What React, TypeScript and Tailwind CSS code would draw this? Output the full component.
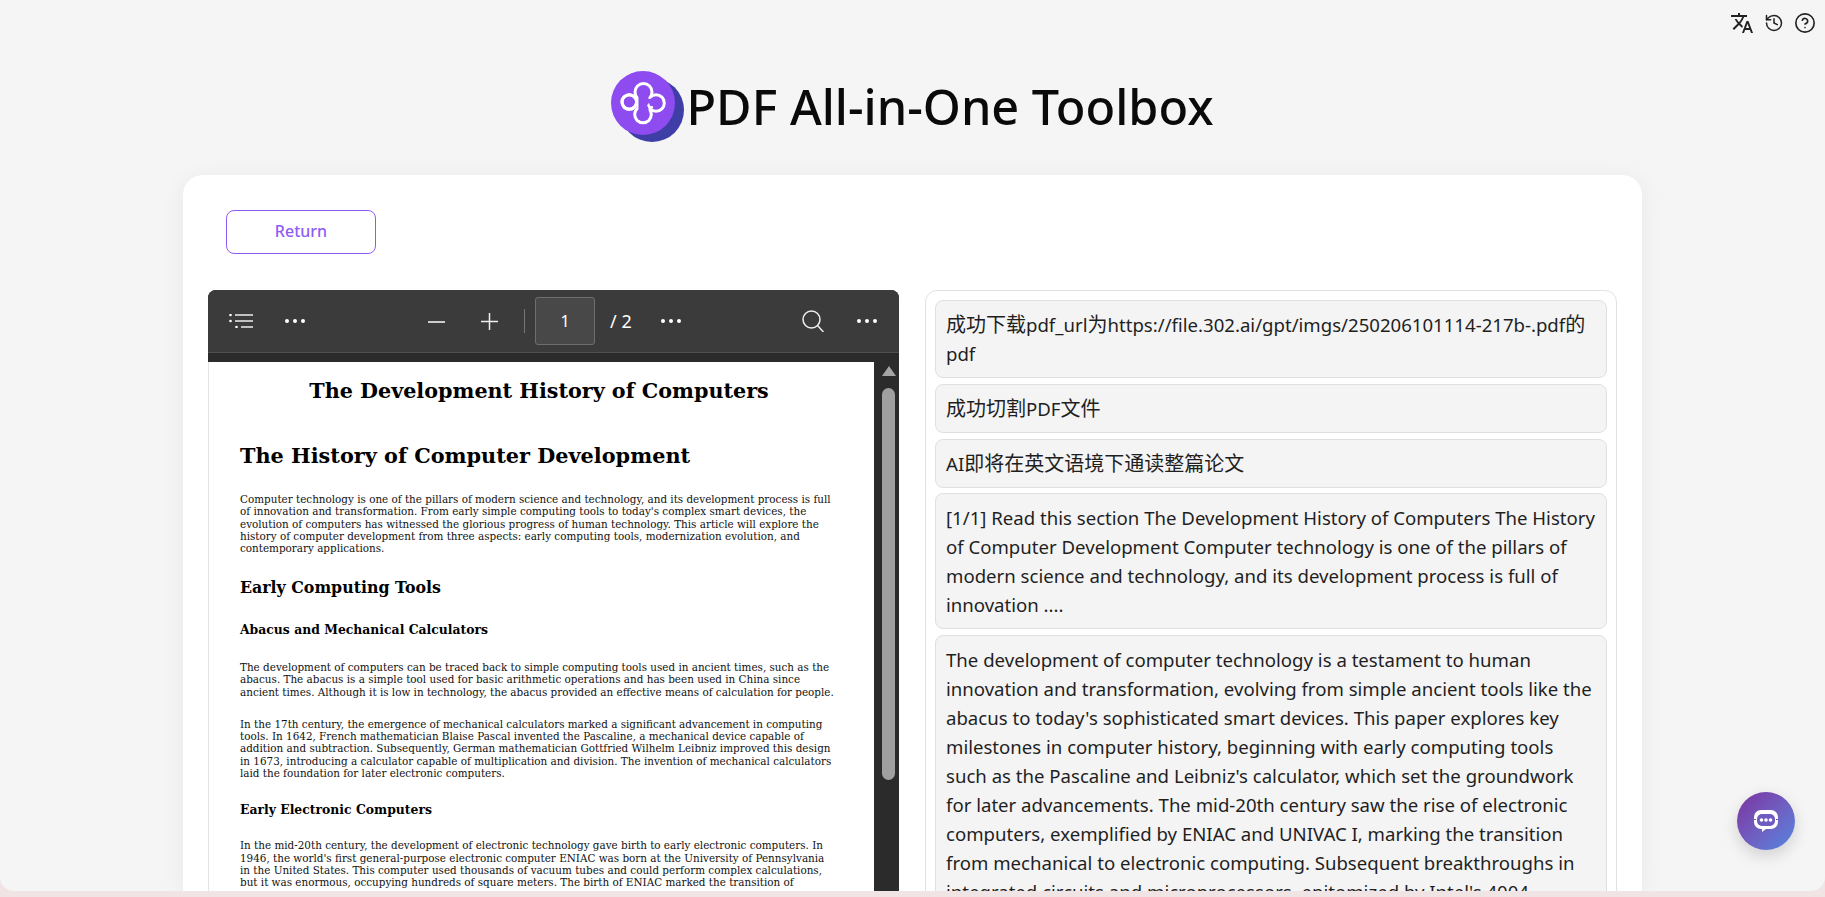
import { MdTranslate } from "react-icons/md";
import { History, CircleHelp } from "lucide-react";

const sans = "font-['Noto_Sans','Noto_Sans_CJK_SC',sans-serif]";

function Logo() {
  const lobes = [
    [32.5, 21, 10],
    [32, 43.5, 9.8],
    [18.3, 31, 8.8],
    [45, 32, 9.8],
  ];
  return (
    <svg width="73" height="72" viewBox="0 0 73 72" className="shrink-0">
      <circle cx="41" cy="39" r="32" fill="#3f3ea6" />
      <circle cx="32" cy="32" r="32" fill="#8e4cf0" />
      {lobes.map(([x, y, r]) => (
        <circle key={`${x}-${y}`} cx={x} cy={y} r={r} fill="#fff" />
      ))}
      <rect x="26" y="24" width="13" height="14" fill="#fff" />
      {lobes.map(([x, y, r]) => (
        <circle key={`i${x}-${y}`} cx={x} cy={y} r={r - 3} fill="#8e4cf0" />
      ))}
      <rect x="27.5" y="20" width="10" height="24" fill="#8e4cf0" />
      <rect x="37" y="28" width="6" height="4" fill="#8e4cf0" />
      <circle cx="18.3" cy="31" r="7.3" fill="none" stroke="#fff" strokeWidth="3" />
      <path d="M37.5 34.5c.8 1.8 1.8 2.4 3.4 1.8" stroke="#fff" strokeWidth="2.6" fill="none" strokeLinecap="round" />
    </svg>
  );
}

function Dots() {
  return (
    <span className="flex gap-[4px]">
      <span className="h-[4px] w-[4px] rounded-full bg-white" />
      <span className="h-[4px] w-[4px] rounded-full bg-white" />
      <span className="h-[4px] w-[4px] rounded-full bg-white" />
    </span>
  );
}

function Toolbar() {
  return (
    <div className="flex h-[63px] items-center rounded-t-lg border-b border-[#505050] bg-[#3b3b3b] pl-[21px] pr-[22px] text-white">
      <div className="flex w-[199px] items-center gap-[32px]">
        <svg width="24" height="14" viewBox="0 0 24 14" stroke="#eee" strokeWidth="1.4" fill="none">
          <path d="M6 1h18M6 7h18M12 13h12" />
          <circle cx="1.5" cy="1" r="1.3" fill="#fff" stroke="none" />
          <circle cx="1.5" cy="7" r="1.3" fill="#fff" stroke="none" />
          <circle cx="7.5" cy="13" r="1.3" fill="#fff" stroke="none" />
        </svg>
        <Dots />
      </div>
      <div className="flex items-center">
        <svg width="17" height="17" viewBox="0 0 17 17" stroke="#ccc" strokeWidth="2" className="mr-[36px]"><path d="M0 9h17" /></svg>
        <svg width="17" height="17" viewBox="0 0 17 17" stroke="#eee" strokeWidth="1.5" className="mr-[26px]"><path d="M0 8.5h17M8.5 0v17" /></svg>
        <span className="mr-[10px] h-[24px] w-px bg-[#777]" />
        <span className="mr-[15px] flex h-[48px] w-[60px] items-center justify-center rounded-[3px] border border-[#6e6e6e] bg-[#484848] text-[16px]">1</span>
        <span className="mr-[29px] text-[18px]">/ 2</span>
        <Dots />
      </div>
      <div className="ml-auto flex items-center gap-[33px]">
        <svg width="22" height="22" viewBox="0 0 22 22" stroke="#eee" strokeWidth="1.5" fill="none"><circle cx="9.5" cy="9.5" r="8.5" /><path d="M15.5 15.5l6 6.5" /></svg>
        <Dots />
      </div>
    </div>
  );
}

function PdfPage() {
  const p = "text-[10.4px] leading-[12.3px] text-[#111]";
  const h4 = "text-[12.4px] font-bold leading-[15px]";
  return (
    <div className="h-full w-[665px] overflow-hidden bg-white pl-[31px] pr-[36px] pt-[17px] font-['DejaVu_Serif',serif] text-black">
      <h1 className="text-center text-[20.7px] font-bold leading-[24px]">The Development History of Computers</h1>
      <h2 className="mt-[40px] text-[20.8px] font-bold leading-[26px]">The History of Computer Development</h2>
      <p className={`${p} mt-[24px]`}>Computer technology is one of the pillars of modern science and technology, and its development process is full of innovation and transformation. From early simple computing tools to today's complex smart devices, the evolution of computers has witnessed the glorious progress of human technology. This article will explore the history of computer development from three aspects: early computing tools, modernization evolution, and contemporary applications.</p>
      <h3 className="mt-[25px] text-[15.8px] font-bold leading-[18px]">Early Computing Tools</h3>
      <h4 className={`mt-[25px] ${h4}`}>Abacus and Mechanical Calculators</h4>
      <p className={`${p} mt-[23.5px]`}>The development of computers can be traced back to simple computing tools used in ancient times, such as the abacus. The abacus is a simple tool used for basic arithmetic operations and has been used in China since ancient times. Although it is low in technology, the abacus provided an effective means of calculation for people.</p>
      <p className={`${p} mt-[20px]`}>In the 17th century, the emergence of mechanical calculators marked a significant advancement in computing tools. In 1642, French mathematician Blaise Pascal invented the Pascaline, a mechanical device capable of addition and subtraction. Subsequently, German mathematician Gottfried Wilhelm Leibniz improved this design in 1673, introducing a calculator capable of multiplication and division. The invention of mechanical calculators laid the foundation for later electronic computers.</p>
      <h4 className={`mt-[22.5px] ${h4}`}>Early Electronic Computers</h4>
      <p className={`${p} mt-[22.5px] whitespace-nowrap`}>
        In the mid-20th century, the development of electronic technology gave birth to early electronic computers. In
        <br />
        1946, the world's first general-purpose electronic computer ENIAC was born at the University of Pennsylvania
        <br />
        in the United States. This computer used thousands of vacuum tubes and could perform complex calculations,
        <br />
        but it was enormous, occupying hundreds of square meters. The birth of ENIAC marked the transition of
        <br />
        computers from the mechanical era to the electronic era.
      </p>
    </div>
  );
}

const logs = [
  "成功下载pdf_url为https://file.302.ai/gpt/imgs/250206101114-217b-.pdf的pdf",
  "成功切割PDF文件",
  "AI即将在英文语境下通读整篇论文",
  "[1/1] Read this section The Development History of Computers The History of Computer Development Computer technology is one of the pillars of modern science and technology, and its development process is full of innovation ....",
  "The development of computer technology is a testament to human innovation and transformation, evolving from simple ancient tools like the abacus to today's sophisticated smart devices. This paper explores key milestones in computer history, beginning with early computing tools such as the Pascaline and Leibniz's calculator, which set the groundwork for later advancements. The mid-20th century saw the rise of electronic computers, exemplified by ENIAC and UNIVAC I, marking the transition from mechanical to electronic computing. Subsequent breakthroughs in integrated circuits and microprocessors, epitomized by Intel's 4004",
];

function Mixed({ text }: { text: string }) {
  return (
    <>
      {text.split(/([\u4e00-\u9fff]+)/).map((s, i) =>
        i % 2 === 1 ? (
          <span key={i} className="text-[20px]">{s}</span>
        ) : (
          <span key={i}>{s}</span>
        ),
      )}
    </>
  );
}

export default function App() {
  return (
    <div className={`h-[897px] w-[1825px] overflow-hidden bg-[#f0e4e4] ${sans}`}>
      <div className="relative flex h-[891px] flex-col overflow-hidden rounded-b-[14px] bg-[#f5f5f5]">
        <div className="absolute right-[9px] top-[11px] flex items-center gap-[10px] text-[#222]">
          <MdTranslate size={24} />
          <History size={20} strokeWidth={1.8} />
          <CircleHelp size={22} strokeWidth={1.8} />
        </div>
        <header className="flex h-[175px] items-center justify-center gap-[2px] pt-[38px]">
          <Logo />
          <h1 className="text-[48.6px] font-medium text-[#0a0a0a]">PDF All-in-One Toolbox</h1>
        </header>
        <main className="mx-[183px] flex-1 overflow-hidden rounded-t-[20px] bg-white px-[25px] pt-[35px] shadow-[0_4px_24px_rgba(0,0,0,0.06)]">
          <button className="ml-[18px] block h-[44px] w-[150px] rounded-lg border border-[#8e5cf5] pb-[2px] text-[16px] font-medium text-[#8e5cf5]">Return</button>
          <div className="mt-[36px] flex gap-[26px]">
            <section className="flex h-[640px] w-[692px] flex-col rounded-t-lg bg-[#2b2b2b]">
              <Toolbar />
              <div className="flex flex-1 overflow-hidden pt-[9px]">
                <div className="border-l border-[#e4e4e4]" />
                <div className="h-full flex-1"><PdfPage /></div>
                <div className="flex w-[25px] flex-col items-center pl-[4px] pt-[4px]">
                  <span className="h-0 w-0 border-x-[7px] border-b-[10px] border-x-transparent border-b-[#a5a5a5]" />
                  <span className="mt-[12px] h-[392px] w-[13px] shrink-0 rounded-full bg-[#a0a0a0]" />
                </div>
              </div>
            </section>
            <section className="flex h-[640px] w-[693px] flex-col gap-[5.75px] rounded-t-xl border border-[#e2e2e2] px-[9px] pt-[9px] text-[18.6px] leading-[29px] text-[#1f1f1f]">
              {logs.map((t) => (
                <div key={t} className="shrink-0 rounded-lg border border-[#e0e0e0] bg-[#f4f4f5] px-[10px] py-[9px]"><Mixed text={t} /></div>
              ))}
            </section>
          </div>
        </main>
        <button className="absolute left-[1737px] top-[792px] flex h-[58px] w-[58px] items-center justify-center rounded-full bg-gradient-to-br from-[#7a2ea0] to-[#4f86e0] shadow-[0_6px_16px_rgba(0,0,0,0.15)]">
          <svg width="26" height="24" viewBox="0 0 26 24">
            <path d="M8 1h10a7 7 0 0 1 7 7v5a7 7 0 0 1-7 7h-5l-4 3v-3H8a7 7 0 0 1-7-7V8a7 7 0 0 1 7-7z" fill="#fff" />
            <rect x="4" y="5" width="18" height="12" rx="5" fill="#6f5cc0" />
            <rect x="0" y="10" width="3" height="1" fill="#6f5cc0" />
            <rect x="23" y="10" width="3" height="1" fill="#6f5cc0" />
            <circle cx="8.5" cy="11" r="1.8" fill="#fff" /><circle cx="13" cy="11" r="1.8" fill="#fff" /><circle cx="17.5" cy="11" r="1.8" fill="#fff" />
          </svg>
        </button>
      </div>
    </div>
  );
}
